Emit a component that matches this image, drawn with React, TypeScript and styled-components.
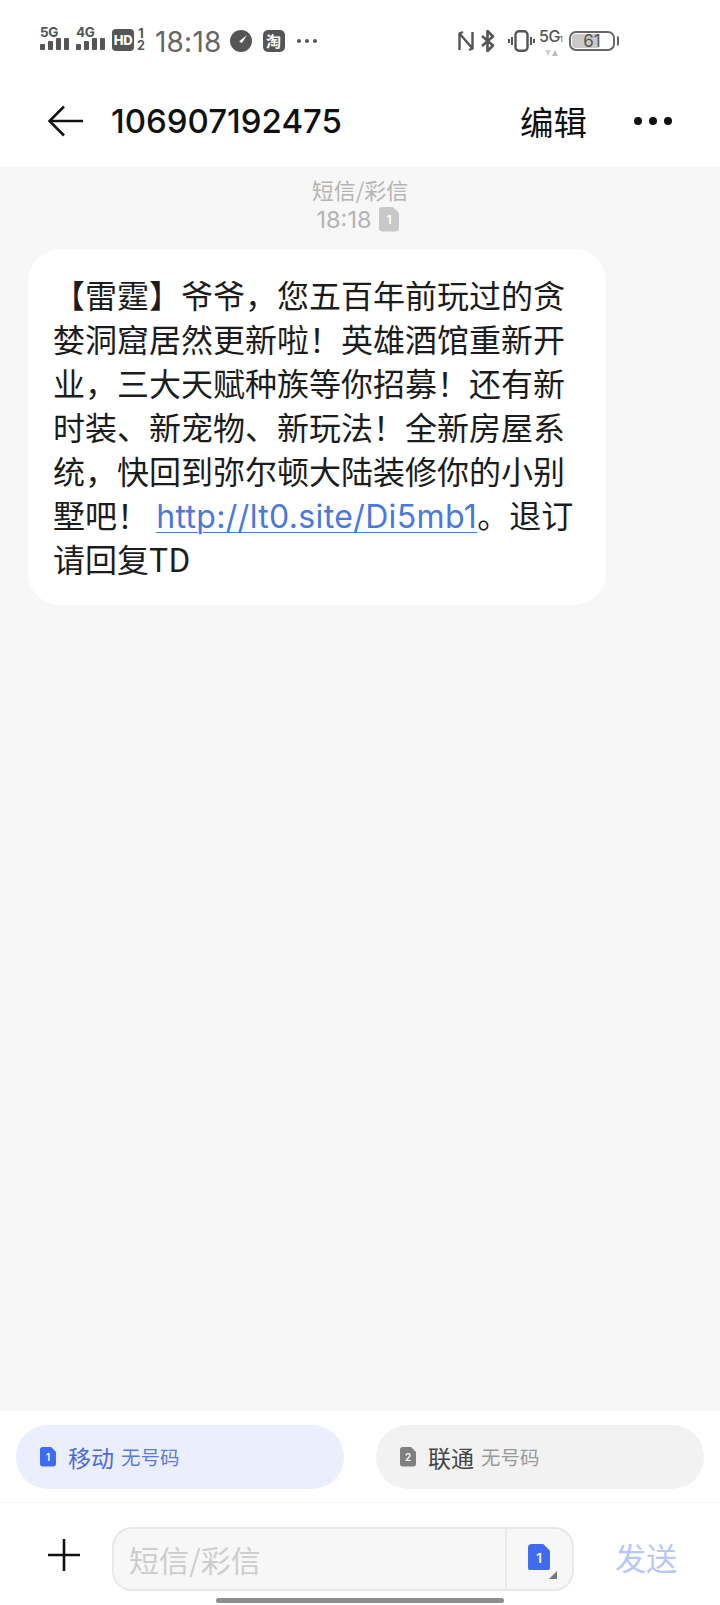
import React from 'react';
import styled, { createGlobalStyle } from 'styled-components';

const FONT = '"Noto Sans CJK SC", Inter, sans-serif';
const LATIN = 'Inter, "Noto Sans CJK SC", sans-serif';

const GlobalStyle = createGlobalStyle`
  html, body {
    margin: 0;
    padding: 0;
    background: #fff;
  }
  * {
    box-sizing: border-box;
  }
`;

const Page = styled.div`
  position: relative;
  width: 720px;
  height: 1605px;
  display: flex;
  flex-direction: column;
  overflow: hidden;
  background: #fff;
  font-family: ${FONT};
`;

/* status bar */
const StatusBar = styled.div`
  height: 76px;
  padding: 26px 105px 0 40px;
  display: flex;
  align-items: flex-start;
  justify-content: space-between;
  color: #555;
  flex-shrink: 0;
`;

const StatusGroup = styled.div`
  display: flex;
  align-items: flex-start;
`;

const Signal = styled.div`
  width: 29px;
  margin-right: 7px;
`;

const SignalLabel = styled.div`
  font: 700 13.5px/12px ${LATIN};
  color: #555;
  letter-spacing: -0.3px;
`;

const Bars = styled.div`
  display: flex;
  gap: 3px;
  align-items: flex-end;
  height: 12px;
`;

const Bar = styled.div<{ $h: number }>`
  width: 5px;
  height: ${(p) => p.$h}px;
  background: #555;
  border-radius: 1px;
`;

const HdBadge = styled.div`
  width: 22px;
  height: 22px;
  margin-top: 3px;
  background: #555;
  border-radius: 4px;
  color: #fff;
  font: 800 13px/22px ${LATIN};
  letter-spacing: -0.4px;
  text-align: center;
`;

const HdSims = styled.div`
  width: 10px;
  margin: 2px 0 0 2px;
  font: 700 12.5px/12px ${LATIN};
  color: #555;
  text-align: center;
`;

const Clock = styled.div`
  margin: 0 8px 0 9px;
  font: 400 28px/32px ${LATIN};
  color: #666;
  letter-spacing: 0.2px;
`;

const AppBadge = styled.div`
  width: 22px;
  height: 22px;
  margin: 4px 0 0 11px;
  background: #555;
  border-radius: 5px;
  color: #fff;
  font: 700 15px/22px ${FONT};
  text-align: center;
`;

const StatusIcon = styled.svg<{ $gap?: number }>`
  display: block;
  margin-top: 4px;
  margin-left: ${(p) => p.$gap ?? 0}px;
`;

const Net = styled.div`
  width: 24px;
  margin: 3px 0 0 4px;
  position: relative;
`;

const NetLabel = styled.div`
  font: 500 16px/15px ${LATIN};
  color: #555;
  letter-spacing: -0.5px;
  white-space: nowrap;
  small {
    font-size: 7px;
    letter-spacing: 0;
  }
`;

const Battery = styled.div`
  position: relative;
  width: 46px;
  height: 20px;
  margin: 5px 0 0 6px;
  border: 2px solid #666;
  border-radius: 7px;
  overflow: visible;
  font: 400 17px/16px ${LATIN};
  color: #555;
  text-align: center;
`;

const BatteryFill = styled.div`
  position: absolute;
  left: 1px;
  top: 1px;
  bottom: 1px;
  width: 61%;
  background: #c9c9c9;
  border-radius: 4px 0 0 4px;
`;

const BatteryText = styled.span`
  position: relative;
`;

const BatteryNub = styled.div`
  position: absolute;
  right: -6px;
  top: 3px;
  width: 2px;
  height: 10px;
  background: #666;
  border-radius: 0 2px 2px 0;
`;

/* header */
const Header = styled.div`
  height: 91px;
  padding: 0 48px 2px;
  display: flex;
  align-items: center;
  flex-shrink: 0;
  background: #fff;
`;

const BackIcon = styled.svg`
  display: block;
  flex-shrink: 0;
`;

const Title = styled.div`
  margin-left: 27px;
  flex: 1;
  font: 500 33px/40px ${LATIN};
  color: #111;
`;

const EditButton = styled.div`
  margin-right: 47px;
  font: 400 33.5px/40px ${FONT};
  color: #111;
`;

const MoreDots = styled.div`
  display: flex;
  gap: 7px;
`;

const Dot = styled.span`
  width: 8px;
  height: 8px;
  border-radius: 50%;
  background: #111;
`;

/* thread */
const Thread = styled.div`
  flex: 1;
  background: #f7f7f7;
  padding: 8px 28px 0;
`;

const Stamp = styled.div`
  display: flex;
  flex-direction: column;
  align-items: center;
  color: #b4b4b4;
  font: 400 22px/29px ${FONT};
`;

const StampTime = styled.div`
  display: flex;
  align-items: center;
  gap: 8px;
  margin: 1px 4px 0 0;
  font: 400 23.5px/29px ${LATIN};
`;

const Bubble = styled.div`
  margin-top: 15px;
  width: 578px;
  padding: 23px 24px 25px 25px;
  background: #fff;
  border-radius: 32px;
  font: 400 32px/44px ${FONT};
  color: #1c1c1c;
`;

const MessageLink = styled.a`
  color: #4a78dc;
  text-decoration: underline;
  font-family: ${LATIN};
  line-height: 1;
  letter-spacing: 0.36px;
  text-underline-offset: 4px;
  text-decoration-thickness: 1px;
`;

/* sim picker */
const SimRow = styled.div`
  height: 92px;
  padding: 14px 16px 0;
  display: flex;
  justify-content: space-between;
  flex-shrink: 0;
  background: #fff;
  border-bottom: 1px solid #f6f6f6;
`;

const SimPill = styled.div<{ $active?: boolean }>`
  width: 328px;
  height: 64px;
  padding-left: 24px;
  display: flex;
  align-items: center;
  border-radius: 32px;
  background: ${(p) => (p.$active ? '#ebeffd' : '#f2f2f2')};
`;

const CarrierName = styled.span<{ $active?: boolean }>`
  margin-left: 12px;
  font: 400 23px/30px ${FONT};
  color: ${(p) => (p.$active ? '#4a6cd8' : '#444')};
`;

const CarrierNote = styled.span<{ $active?: boolean }>`
  margin-left: 7px;
  font: 400 19.5px/30px ${FONT};
  color: ${(p) => (p.$active ? '#5a7bdc' : '#999')};
`;

/* composer */
const Composer = styled.div`
  height: 102px;
  flex-shrink: 0;
  display: flex;
  align-items: flex-start;
  padding: 24px 0 0 48px;
  background: #fff;
`;

const PlusIcon = styled.svg`
  display: block;
  margin-top: 12px;
  flex-shrink: 0;
`;

const InputBox = styled.div`
  margin-left: 32px;
  width: 462px;
  height: 64px;
  display: flex;
  background: #f7f7f7;
  border: 2px solid #e8e8e8;
  border-radius: 20px;
`;

const Placeholder = styled.div`
  flex: 1;
  padding-left: 15px;
  font: 400 30px/60px ${FONT};
  color: #cdcdcd;
  border-right: 2px solid #e8e8e8;
`;

const SimSwitch = styled.div`
  position: relative;
  width: 65px;
  display: flex;
  align-items: center;
  padding: 0 0 4px 21px;
`;

const SwitchCorner = styled.svg`
  position: absolute;
  right: 15px;
  bottom: 10px;
`;

const SendButton = styled.div`
  margin-left: 41px;
  font: 400 31px/60px ${FONT};
  color: #b7c7f6;
`;

const HomeBar = styled.div`
  position: absolute;
  left: 216px;
  bottom: 2px;
  width: 288px;
  height: 5px;
  border-radius: 3px;
  background: #8e8e8e;
`;

const SimSvg = styled.svg`
  display: block;
  flex-shrink: 0;
`;

const SimGlyph = ({ n, size, color }: { n: number; size: number; color: string }) => (
  <SimSvg width={size} height={size * 1.22} viewBox="0 0 18 22">
    <path d="M3 0h9.5L18 5.5V19a3 3 0 0 1-3 3H3a3 3 0 0 1-3-3V3a3 3 0 0 1 3-3z" fill={color} />
    <text x="9" y="15.5" textAnchor="middle" fontFamily="Inter, sans-serif" fontWeight="600" fontSize="11" fill="#fff">{n}</text>
  </SimSvg>
);

const App: React.FunctionComponent = () => {
  return (
    <Page lang="zh-CN">
      <GlobalStyle />
      <StatusBar>
        <StatusGroup>
          <Signal>
            <SignalLabel>5G</SignalLabel>
            <Bars>
              <Bar $h={6} /><Bar $h={9} /><Bar $h={12} /><Bar $h={12} />
            </Bars>
          </Signal>
          <Signal>
            <SignalLabel>4G</SignalLabel>
            <Bars>
              <Bar $h={6} /><Bar $h={9} /><Bar $h={12} /><Bar $h={12} />
            </Bars>
          </Signal>
          <HdBadge>HD</HdBadge>
          <HdSims>1<br />2</HdSims>
          <Clock>18:18</Clock>
          <StatusIcon width="22" height="22" viewBox="0 0 22 22">
            <circle cx="11" cy="11" r="11" fill="#555" />
            <path d="M17 5l-5.2 8.2-2.6-2z" fill="#fff" />
          </StatusIcon>
          <AppBadge>淘</AppBadge>
          <StatusIcon width="22" height="22" viewBox="0 0 22 22" $gap={11}>
            <circle cx="3" cy="11" r="2" fill="#555" />
            <circle cx="11" cy="11" r="2" fill="#555" />
            <circle cx="19" cy="11" r="2" fill="#555" />
          </StatusIcon>
        </StatusGroup>
        <StatusGroup>
          <StatusIcon width="16" height="22" viewBox="0 0 16 22">
            <path d="M1.5 20V3.5L14.5 18.5V2" fill="none" stroke="#555" strokeWidth="2.4" strokeLinejoin="round" />
            <path d="M1.5 3.5L5 2M14.5 18.5L11 20" fill="none" stroke="#555" strokeWidth="2.4" />
          </StatusIcon>
          <StatusIcon width="16" height="22" viewBox="0 0 16 22" $gap={6}>
            <path d="M2 6l11 9.5L7.5 21V1L13 6.5 2 16" fill="none" stroke="#555" strokeWidth="2.6" strokeLinejoin="round" />
          </StatusIcon>
          <StatusIcon width="27" height="22" viewBox="0 0 27 22" $gap={12}>
            <rect x="7.5" y="1.2" width="12" height="19.6" rx="3.5" fill="none" stroke="#555" strokeWidth="2.4" />
            <path d="M4 7v8M1 9v4M23 7v8M26 9v4" stroke="#555" strokeWidth="2" />
          </StatusIcon>
          <Net>
            <NetLabel>5G<small>1</small></NetLabel>
            <svg width="18" height="8" viewBox="0 0 18 8" style={{ display: 'block', margin: '2px 0 0 5px' }}>
              <path d="M1 1h6L4 7z" fill="#d0d0d0" />
              <path d="M8 7h6l-3-6z" fill="#bbb" />
            </svg>
          </Net>
          <Battery>
            <BatteryFill />
            <BatteryText>61</BatteryText>
            <BatteryNub />
          </Battery>
        </StatusGroup>
      </StatusBar>

      <Header>
        <BackIcon width="36" height="32" viewBox="0 0 36 32">
          <path d="M35 16H2M16 1.5L1.5 16 16 30.5" fill="none" stroke="#111" strokeWidth="2.6" />
        </BackIcon>
        <Title>106907192475</Title>
        <EditButton>编辑</EditButton>
        <MoreDots><Dot /><Dot /><Dot /></MoreDots>
      </Header>

      <Thread>
        <Stamp>
          <div>短信/彩信</div>
          <StampTime>
            18:18
            <SimGlyph n={1} size={20} color="#c8c8c8" />
          </StampTime>
        </Stamp>
        <Bubble>
          【雷霆】爷爷，您五百年前玩过的贪婪洞窟居然更新啦！英雄酒馆重新开业，三大天赋种族等你招募！还有新时装、新宠物、新玩法！全新房屋系统，快回到弥尔顿大陆装修你的小别墅吧！ <MessageLink href="#">http://lt0.site/Di5mb1</MessageLink>。退订请回复TD
        </Bubble>
      </Thread>

      <SimRow>
        <SimPill $active>
          <SimGlyph n={1} size={16} color="#3f6bf0" />
          <CarrierName $active>移动</CarrierName>
          <CarrierNote $active>无号码</CarrierNote>
        </SimPill>
        <SimPill>
          <SimGlyph n={2} size={16} color="#7f7f7f" />
          <CarrierName>联通</CarrierName>
          <CarrierNote>无号码</CarrierNote>
        </SimPill>
      </SimRow>

      <Composer>
        <PlusIcon width="32" height="32" viewBox="0 0 32 32">
          <path d="M16 0v32M0 16h32" stroke="#111" strokeWidth="2.6" />
        </PlusIcon>
        <InputBox>
          <Placeholder>短信/彩信</Placeholder>
          <SimSwitch>
            <SimGlyph n={1} size={22} color="#3f6bf0" />
            <SwitchCorner width="8" height="8" viewBox="0 0 8 8">
              <path d="M8 0v8H0z" fill="#777" />
            </SwitchCorner>
          </SimSwitch>
        </InputBox>
        <SendButton>发送</SendButton>
      </Composer>
      <HomeBar />
    </Page>
  );
};

export default App;
